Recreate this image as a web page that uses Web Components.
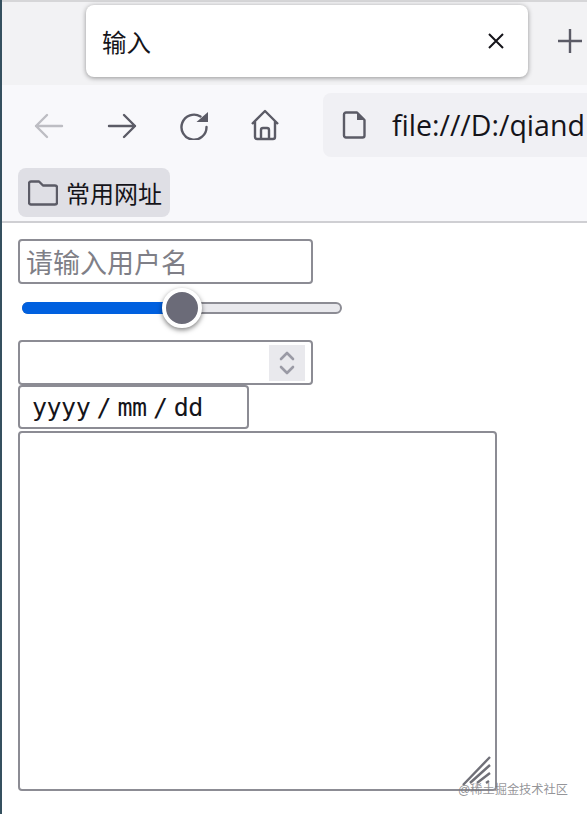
<!DOCTYPE html>
<html>
<head>
<meta charset="utf-8">
<style>
  html, body { margin: 0; height: 100%; background: #fff; overflow: hidden; }
  body { font-family: "Liberation Sans", "Noto Sans CJK SC", sans-serif; }
</style>
</head>
<body>
<browser-window>
  <browser-tab slot="tab">输入</browser-tab>
  <browser-toolbar slot="toolbar">file:///D:/qiand</browser-toolbar>
  <bookmark-bar slot="bookmarks">常用网址</bookmark-bar>
  <text-field placeholder="请输入用户名"></text-field>
  <range-field></range-field>
  <number-field></number-field>
  <date-field>yyyy / mm / dd</date-field>
  <area-field></area-field>
</browser-window>
<water-mark>@稀土掘金技术社区</water-mark>

<script>
const CJK = '"Liberation Sans", "Noto Sans CJK SC", sans-serif'

function define(name, html) {
  customElements.define(name, class extends HTMLElement {
    constructor() {
      super()
      this.attachShadow({ mode: 'open' }).innerHTML = html
    }
    connectedCallback() {
      const label = this.shadowRoot.querySelector('[data-placeholder]')
      if (label) label.textContent = this.getAttribute('placeholder')
    }
  })
}

define('browser-window', `
  <style>
    :host { display: flex; flex-direction: column; width: 587px; height: 814px; border-left: 2px solid #35505f; box-sizing: border-box; }
    .tabs { height: 85px; box-sizing: border-box; border-top: 2px solid #d6d6d8; background: #f2f2f4; flex: none; }
    .bar { height: 138px; background: #f8f8fb; border-bottom: 2px solid #cfcfd3; box-sizing: border-box; flex: none; }
    .page { display: flex; flex-direction: column; align-items: flex-start; padding: 16px 0 0 16px; }
  </style>
  <div class="tabs"><slot name="tab"></slot></div>
  <div class="bar">
    <slot name="toolbar"></slot>
    <slot name="bookmarks"></slot>
  </div>
  <div class="page"><slot></slot></div>
`)

define('browser-tab', `
  <style>
    :host { display: block; padding: 3px 0 0 84px; }
    .tab { display: flex; align-items: center; justify-content: space-between; width: 442px; height: 72px; box-sizing: border-box; padding: 0 22px 0 16px; background: #fff; border-radius: 8px; box-shadow: 0 1px 5px rgba(0,0,0,.4); font: 24.500px ${CJK}; color: #15141a; }
    .wrap { display: flex; align-items: center; gap: 30px; }
    svg { display: block; }
  </style>
  <div class="wrap">
    <div class="tab">
      <span><slot></slot></span>
      <svg width="20" height="20" viewBox="0 0 20 20" fill="none" stroke="#15141a" stroke-width="2"><path d="M3 3l14 14M17 3L3 17"/></svg>
    </div>
    <svg width="24" height="24" viewBox="0 0 24 24" fill="none" stroke="#5b5b66" stroke-width="2.400"><path d="M12 0v24M0 12h24"/></svg>
  </div>
`)

define('browser-toolbar', `
  <style>
    :host { display: flex; align-items: center; height: 64px; padding: 8px 0 0 32px; }
    .btn { width: 72px; flex: none; display: flex; margin-top: 2px; }
    .addr { flex: 1; display: flex; align-items: center; height: 64px; margin-left: 2px; padding-left: 19px; gap: 26px; background: #f0f0f4; border-radius: 8px 0 0 8px; font: 28.500px "Open Sans", ${CJK}; color: #15141a; white-space: nowrap; overflow: hidden; }
    svg { display: block; flex: none; }
  </style>
  <div class="btn"><svg width="30" height="26" viewBox="0 0 30 26" fill="none" stroke="#bdbdc3" stroke-width="2.400" stroke-linecap="round" stroke-linejoin="round"><path d="M2 13h26M13 2L2 13l11 11"/></svg></div>
  <div class="btn"><svg width="32" height="26" viewBox="0 0 32 26" fill="none" stroke="#5b5b66" stroke-width="2.400" stroke-linecap="round" stroke-linejoin="round"><path d="M3 13h26M18 2l11 11-11 11"/></svg></div>
  <div class="btn" style="padding-left:2px;width:70px"><svg width="28" height="28" viewBox="0 0 28 28" fill="none" stroke="#5b5b66" stroke-width="2.400" stroke-linecap="round"><path d="M26.500 15a12.500 12.500 0 1 1-6-10.500"/><path d="M28 0v10H16.500z" fill="#5b5b66" stroke="none"/></svg></div>
  <div class="btn" style="width:71px;margin-top:0"><svg width="30" height="32" viewBox="0 0 30 32" fill="none" stroke="#5b5b66" stroke-width="2.400" stroke-linejoin="round"><path d="M2 15L15 2l13 13M5 12v16a2 2 0 0 0 2 2h16a2 2 0 0 0 2-2V12"/><path d="M11 30v-9a2 2 0 0 1 2-2h4a2 2 0 0 1 2 2v9"/></svg></div>
  <div class="addr">
    <svg width="24" height="28" viewBox="0 0 24 28" fill="none" stroke="#5b5b66" stroke-width="2.400" stroke-linejoin="round"><path d="M4 1.500h11L22.500 9v15.500a2 2 0 0 1-2 2H4a2 2 0 0 1-2-2v-21a2 2 0 0 1 2-2z"/><path d="M15 1.500l7.500 7.500H15z" fill="#5b5b66" stroke="none"/></svg>
    <span><slot></slot></span>
  </div>
`)

define('bookmark-bar', `
  <style>
    :host { display: block; padding: 11px 0 0 16px; }
    .item { display: inline-flex; align-items: center; gap: 8px; height: 49px; padding: 0 8px 0 10px; background: #dfdfe5; border-radius: 8px; font: 24px ${CJK}; color: #15141a; }
    svg { display: block; }
  </style>
  <div class="item">
    <svg width="30" height="26" viewBox="0 0 30 26" fill="none" stroke="#5b5b66" stroke-width="2.400" stroke-linejoin="round"><path d="M3 1.500h8l4 4h12a2 2 0 0 1 2 2v15a2 2 0 0 1-2 2H3a2 2 0 0 1-2-2v-19a2 2 0 0 1 2-2z"/></svg>
    <span><slot></slot></span>
  </div>
`)

const fieldBox = 'box-sizing: border-box; border: 2px solid #8c8c94; border-radius: 4px; background: #fff;'

define('text-field', `
  <style>
    :host { display: flex; align-items: center; width: 295px; height: 45px; padding-left: 6px; ${fieldBox} font: 27px ${CJK}; color: #7f7f87; }
  </style>
  <span data-placeholder></span>
`)

define('range-field', `
  <style>
    :host { display: block; width: 320px; height: 36px; margin: 6px 0 14px 4px; position: relative; }
    .track { position: absolute; left: 0; right: 0; top: 12px; height: 12px; box-sizing: border-box; border: 2px solid #8c8c94; border-radius: 6px; background: #e9e9ed; }
    .fill { position: absolute; left: 0; width: 150px; top: 12px; height: 12px; border-radius: 6px 0 0 6px; background: #0060df; }
    .thumb { position: absolute; left: 140px; top: -2px; width: 40px; height: 40px; box-sizing: border-box; border: 4px solid #fff; border-radius: 50%; background: #6b6b78; box-shadow: 0 2px 5px rgba(0,0,0,.5); }
  </style>
  <div class="track"></div>
  <div class="fill"></div>
  <div class="thumb"></div>
`)

define('number-field', `
  <style>
    :host { display: flex; align-items: center; justify-content: flex-end; width: 295px; height: 45px; padding-right: 6px; ${fieldBox} }
    .spin { width: 36px; height: 36px; background: #e9e9ed; display: flex; align-items: center; justify-content: center; }
    svg { display: block; }
  </style>
  <div class="spin">
    <svg width="16" height="28" viewBox="0 0 16 28" fill="none" stroke="#9a9aa5" stroke-width="2.600" stroke-linecap="round" stroke-linejoin="round"><path d="M2 10l6-6 6 6M2 18l6 6 6-6"/></svg>
  </div>
`)

define('date-field', `
  <style>
    :host { display: flex; align-items: center; width: 231px; height: 44px; padding-left: 12px; ${fieldBox} font: 25px "DejaVu Sans Mono", "Liberation Mono", monospace; letter-spacing: -0.500px; word-spacing: -8.200px; color: #15141a; white-space: pre; }
  </style>
  <slot></slot>
`)

define('area-field', `
  <style>
    :host { display: block; width: 479px; height: 360px; margin-top: 2px; position: relative; ${fieldBox} }
    svg { position: absolute; right: 3px; bottom: 3px; display: block; }
  </style>
  <svg width="30" height="30" viewBox="0 0 30 30" fill="none" stroke="#707078" stroke-width="2.400"><path d="M1 29L28 1M8 27L28 9M15 27L28 17M24 27l3-2"/></svg>
`)

define('water-mark', `
  <style>
    :host { position: absolute; left: 458px; top: 780px; font: 12.200px ${CJK}; color: rgba(120,120,125,.8); white-space: nowrap; }
  </style>
  <slot></slot>
`)
</script>
</body>
</html>
